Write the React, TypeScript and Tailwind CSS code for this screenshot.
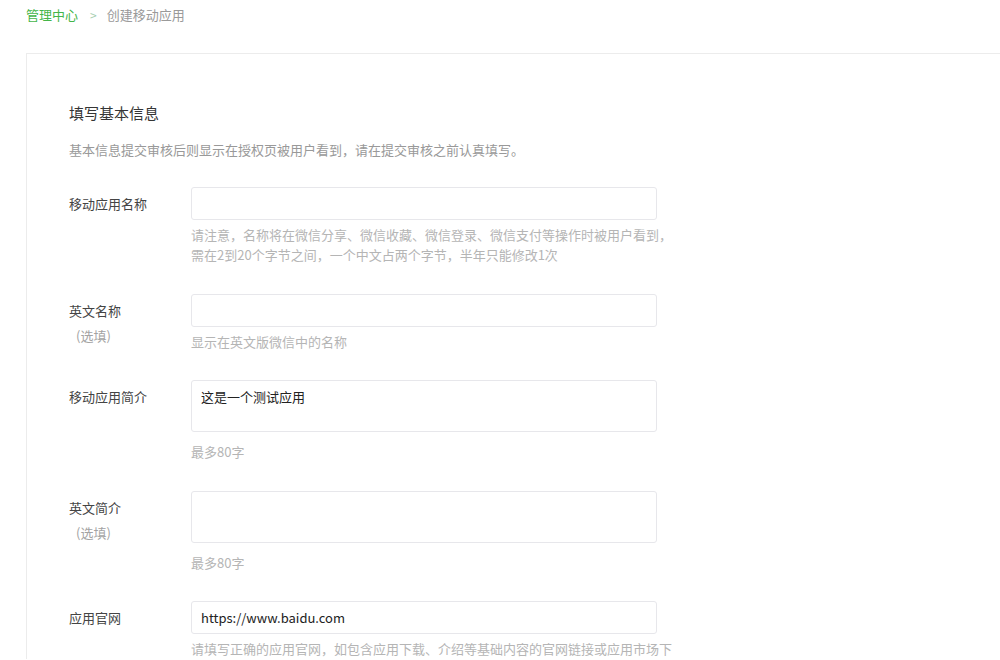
const font = { fontFamily: '"Noto Sans CJK SC", "Noto Sans", sans-serif' }

type Row = {
  label: string
  optional?: boolean
  multiline?: boolean
  value?: string
  hints: string[]
  gap: string
}

const rows: Row[] = [
  {
    label: '移动应用名称',
    hints: [
      '请注意，名称将在微信分享、微信收藏、微信登录、微信支付等操作时被用户看到，',
      '需在2到20个字节之间，一个中文占两个字节，半年只能修改1次',
    ],
    gap: 'mb-[29px]',
  },
  { label: '英文名称', optional: true, hints: ['显示在英文版微信中的名称'], gap: 'mb-[28px]' },
  {
    label: '移动应用简介',
    multiline: true,
    value: '这是一个测试应用',
    hints: ['最多80字'],
    gap: 'mb-[29px]',
  },
  { label: '英文简介', optional: true, multiline: true, hints: ['最多80字'], gap: 'mb-[28px]' },
  {
    label: '应用官网',
    value: 'https://www.baidu.com',
    hints: ['请填写正确的应用官网，如包含应用下载、介绍等基础内容的官网链接或应用市场下'],
    gap: 'mb-[28px]',
  },
]

function FormRow({ row }: { row: Row }) {
  return (
    <div className={`flex ${row.gap}`}>
      <div className="w-[122px] shrink-0">
        <div className="h-[33px] leading-[33px] text-[13px] text-[#444]">{row.label}</div>
        {row.optional && (
          <div className="pl-[7px] leading-[18px] text-[13px] text-[#a3a3a3]">(选填)</div>
        )}
      </div>
      <div>
        {row.multiline ? (
          <div className="w-[466px] h-[52px] border border-[#e7e7eb] rounded-[3px] px-[9px] pt-[6px] text-[13px] leading-[20px] text-[#222]">
            {row.value}
          </div>
        ) : (
          <div className="w-[466px] h-[33px] border border-[#e7e7eb] rounded-[3px] px-[9px] leading-[31px] text-[13px] text-[#222]">
            {row.value}
          </div>
        )}
        <div className={row.multiline ? 'mt-[10px]' : 'mt-[5px]'}>
          {row.hints.map(h => (
            <div key={h} className="leading-[20px] text-[13px] text-[#b5b5b5] whitespace-nowrap">
              {h}
            </div>
          ))}
        </div>
      </div>
    </div>
  )
}

export default function App() {
  return (
    <div className="w-[1000px] h-[660px] overflow-hidden bg-white" style={font}>
      <div className="pl-[26px] h-[30px] leading-[30px] text-[13px] flex items-center">
        <span className="text-[#44b549]">管理中心</span>
        <span className="text-[#a8cfb2] ml-[12px] mr-[10px] text-[12px]">&gt;</span>
        <span className="text-[#9a9a9a]">创建移动应用</span>
      </div>

      <div className="ml-[26px] mt-[23px] w-[1000px] border-t border-l border-[#ececec] pl-[42px] pt-[47px]">
        <h2 className="text-[15px] leading-[24px] text-[#353535]">填写基本信息</h2>
        <p className="mt-[15px] text-[13px] leading-[20px] text-[#999]">
          基本信息提交审核后则显示在授权页被用户看到，请在提交审核之前认真填写。
        </p>
        <div className="mt-[27px]">
          {rows.map(r => (
            <FormRow key={r.label} row={r} />
          ))}
        </div>
      </div>
    </div>
  )
}
